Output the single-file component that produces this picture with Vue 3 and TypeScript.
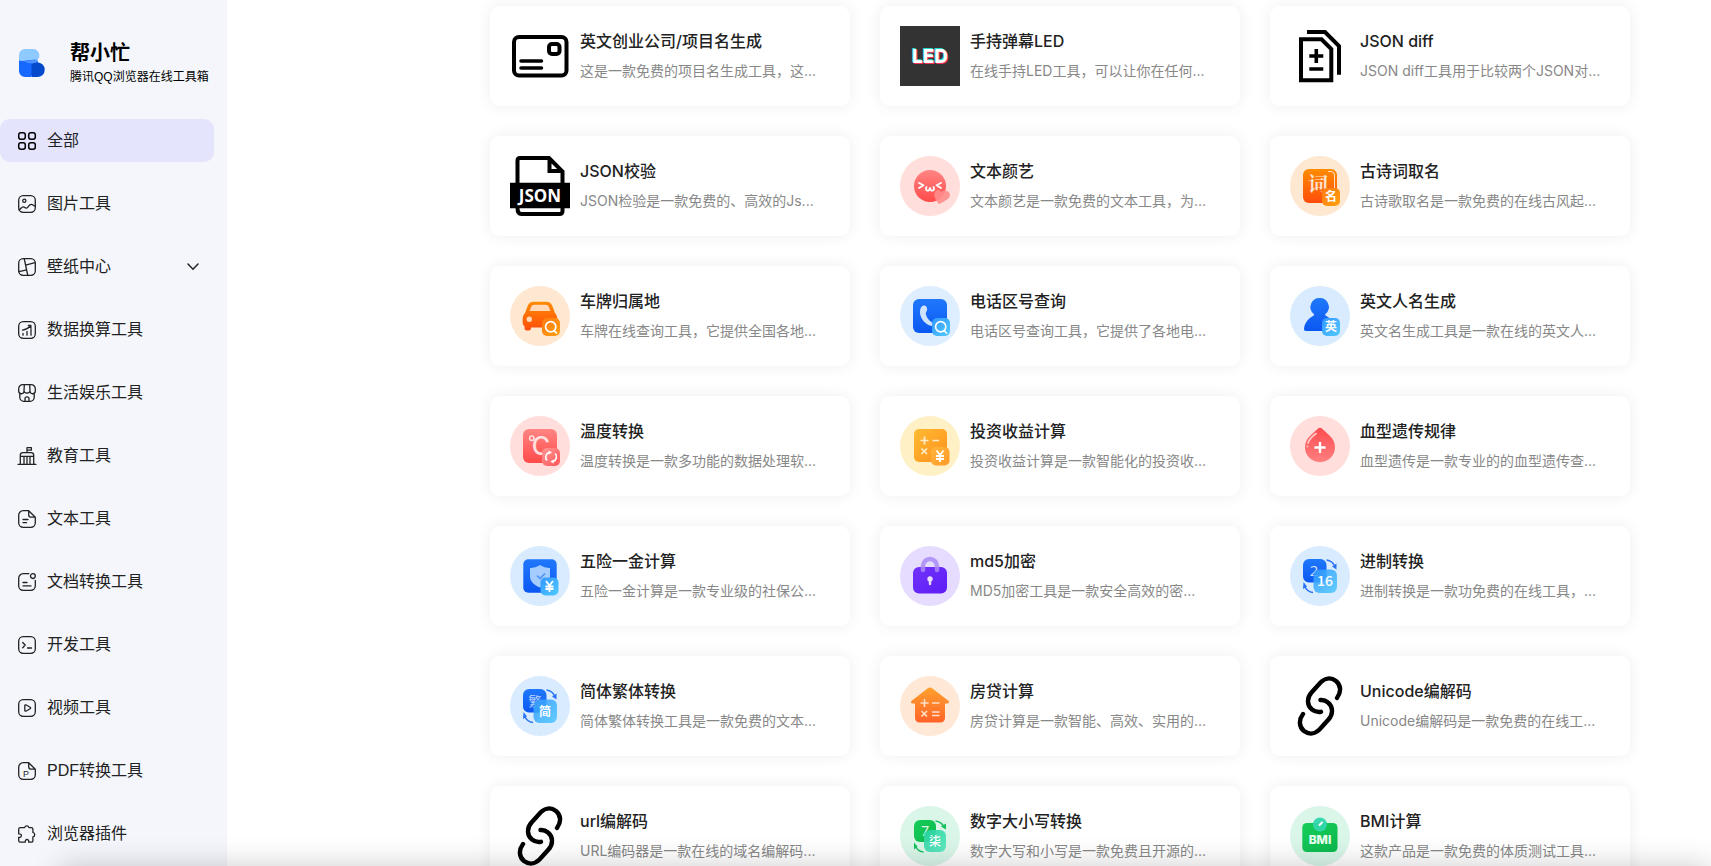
<script setup lang="ts">
interface NavItem {
  icon: string
  label: string
  expandable?: boolean
}

interface Tool {
  icon: string
  tint?: string
  title: string
  desc: string
}

const navItems: NavItem[] = [
  { icon: 'all', label: '全部' },
  { icon: 'image', label: '图片工具' },
  { icon: 'wallpaper', label: '壁纸中心', expandable: true },
  { icon: 'chart', label: '数据换算工具' },
  { icon: 'shop', label: '生活娱乐工具' },
  { icon: 'school', label: '教育工具' },
  { icon: 'text', label: '文本工具' },
  { icon: 'doc', label: '文档转换工具' },
  { icon: 'code', label: '开发工具' },
  { icon: 'video', label: '视频工具' },
  { icon: 'pdf', label: 'PDF转换工具' },
  { icon: 'plugin', label: '浏览器插件' },
]

const tools: Tool[] = [
  { icon: 'namecard', title: '英文创业公司/项目名生成', desc: '这是一款免费的项目名生成工具，这...' },
  { icon: 'led', title: '手持弹幕LED', desc: '在线手持LED工具，可以让你在任何...' },
  { icon: 'diff', title: 'JSON diff', desc: 'JSON diff工具用于比较两个JSON对...' },
  { icon: 'json', title: 'JSON校验', desc: 'JSON检验是一款免费的、高效的Js...' },
  { icon: 'face', tint: '#ffdedb', title: '文本颜艺', desc: '文本颜艺是一款免费的文本工具，为...' },
  { icon: 'poem', tint: '#ffe8d2', title: '古诗词取名', desc: '古诗歌取名是一款免费的在线古风起...' },
  { icon: 'car', tint: '#ffe8d2', title: '车牌归属地', desc: '车牌在线查询工具，它提供全国各地...' },
  { icon: 'phone', tint: '#deeeff', title: '电话区号查询', desc: '电话区号查询工具，它提供了各地电...' },
  { icon: 'person', tint: '#d9ebff', title: '英文人名生成', desc: '英文名生成工具是一款在线的英文人...' },
  { icon: 'celsius', tint: '#ffdedc', title: '温度转换', desc: '温度转换是一款多功能的数据处理软...' },
  { icon: 'invest', tint: '#fff0c6', title: '投资收益计算', desc: '投资收益计算是一款智能化的投资收...' },
  { icon: 'blood', tint: '#ffdedc', title: '血型遗传规律', desc: '血型遗传是一款专业的的血型遗传查...' },
  { icon: 'insurance', tint: '#d9ebff', title: '五险一金计算', desc: '五险一金计算是一款专业级的社保公...' },
  { icon: 'lock', tint: '#e6dcff', title: 'md5加密', desc: 'MD5加密工具是一款安全高效的密...' },
  { icon: 'radix', tint: '#d9ebff', title: '进制转换', desc: '进制转换是一款功免费的在线工具，...' },
  { icon: 'hanzi', tint: '#d9ebff', title: '简体繁体转换', desc: '简体繁体转换工具是一款免费的文本...' },
  { icon: 'house', tint: '#ffe8d6', title: '房贷计算', desc: '房贷计算是一款智能、高效、实用的...' },
  { icon: 'link', title: 'Unicode编解码', desc: 'Unicode编解码是一款免费的在线工...' },
  { icon: 'link', title: 'url编解码', desc: 'URL编码器是一款在线的域名编解码...' },
  { icon: 'digits', tint: '#d9f6e9', title: '数字大小写转换', desc: '数字大写和小写是一款免费且开源的...' },
  { icon: 'bmi', tint: '#d9f6e9', title: 'BMI计算', desc: '这款产品是一款免费的体质测试工具...' },
]
</script>

<template>
  <div class="page">
    <aside class="sidebar">
      <a class="brand" href="#">
        <svg class="logo" viewBox="0 0 28 30" aria-hidden="true">
          <defs>
            <linearGradient id="g-orange" x1="0" y1="0" x2="0" y2="1"><stop offset="0" stop-color="#ff8c00" /><stop offset="1" stop-color="#ff4c0c" /></linearGradient>
            <linearGradient id="g-orange-badge" x1="0" y1="0" x2="1" y2="1"><stop offset="0" stop-color="#ff7a10" /><stop offset="1" stop-color="#ffa010" /></linearGradient>
            <linearGradient id="g-yellow" x1="0" y1="0" x2="1" y2="1"><stop offset="0" stop-color="#ffbb33" /><stop offset="1" stop-color="#ff901c" /></linearGradient>
            <linearGradient id="g-yellow-badge" x1="0" y1="0" x2="1" y2="1"><stop offset="0" stop-color="#ffb53a" /><stop offset="1" stop-color="#ff9a28" /></linearGradient>
            <linearGradient id="g-red" x1="0" y1="0" x2="0" y2="1"><stop offset="0" stop-color="#ff8583" /><stop offset="1" stop-color="#ff4a4a" /></linearGradient>
            <linearGradient id="g-red-badge" x1="0" y1="0" x2="1" y2="1"><stop offset="0" stop-color="#ff9896" /><stop offset="1" stop-color="#ff5558" /></linearGradient>
            <linearGradient id="g-blood" x1="0" y1="0" x2="0" y2="1"><stop offset="0" stop-color="#ff4c4f" /><stop offset="1" stop-color="#ff7f80" /></linearGradient>
            <linearGradient id="g-blue" x1="0" y1="0" x2="0" y2="1"><stop offset="0" stop-color="#2078fb" /><stop offset="1" stop-color="#0b57f2" /></linearGradient>
            <linearGradient id="g-blue-badge" x1="0" y1="0" x2="1" y2="1"><stop offset="0" stop-color="#3296ff" /><stop offset="1" stop-color="#52cbff" /></linearGradient>
            <linearGradient id="g-violet" x1="0" y1="0" x2="1" y2="1"><stop offset="0" stop-color="#7232fa" /><stop offset="1" stop-color="#5d1df6" /></linearGradient>
            <linearGradient id="g-house" x1="0" y1="0" x2="0" y2="1"><stop offset="0" stop-color="#ffa12e" /><stop offset="1" stop-color="#ff6328" /></linearGradient>
            <linearGradient id="g-green" x1="0" y1="0" x2="1" y2="1"><stop offset="0" stop-color="#16cd58" /><stop offset="1" stop-color="#0cb84f" /></linearGradient>
            <linearGradient id="g-green-badge" x1="0" y1="0" x2="1" y2="1"><stop offset="0" stop-color="#27d2a0" /><stop offset="1" stop-color="#58e8bf" /></linearGradient>
          </defs>
          <path d="M1 13V7a6 6 0 0 1 6-6h8a6.500 6.500 0 0 1 4 11.500L1 15Z" fill="#8ec9ff" />
          <path d="M1 12.500c5 1.500 10-1.500 18-.5l1.500 3-7.500 14H7a6 6 0 0 1-6-6Z" fill="#1668ff" />
          <path d="M6 13.200c5-.4 9-2.200 13-1.300 1 .3 1 2-.5 2.800-3 1.400-8 .8-12.500-1.500Z" fill="#4b91ff" />
          <path d="M13.500 16c2-1 4-1.500 6-1.500a7.200 7.200 0 0 1 0 14.500h-6Z" fill="#0549cd" />
        </svg>
        <span class="brand-text">
          <strong class="brand-name">帮小忙</strong>
          <span class="brand-sub">腾讯QQ浏览器在线工具箱</span>
        </span>
      </a>

      <nav class="nav">
        <a v-for="(item, i) in navItems" :key="item.label" href="#" class="nav-item" :class="{ active: i === 0 }">
          <svg class="nav-icon" viewBox="0 0 18 18" aria-hidden="true">
            <template v-if="item.icon === 'all'">
              <rect x="0.700" y="0.700" width="6.600" height="6.600" rx="2.200" />
              <rect x="10.700" y="0.700" width="6.600" height="6.600" rx="2.200" />
              <rect x="0.700" y="10.700" width="6.600" height="6.600" rx="2.200" />
              <rect x="10.700" y="10.700" width="6.600" height="6.600" rx="2.200" />
            </template>
            <template v-else-if="item.icon === 'image'">
              <rect x="0.700" y="0.700" width="16.600" height="16.600" rx="4.500" />
              <circle cx="6.300" cy="5.800" r="1.600" />
              <path d="M1 14.800c1.800-.4 2.400-3 4.200-2.900 1.600.1 1.700 1.600 3.300 1.200 2.200-.6 2.300-3.800 4.600-3.800 1.800 0 2.500 1.600 4 1.900" />
            </template>
            <template v-else-if="item.icon === 'wallpaper'">
              <rect x="0.700" y="0.700" width="16.600" height="16.600" rx="4.500" />
              <path d="M6.300 1l3.400 16M1 13.600l7.700-1.800M7.600 7.200l9.400-2.500" />
            </template>
            <template v-else-if="item.icon === 'chart'">
              <rect x="0.700" y="0.700" width="16.600" height="16.600" rx="4.500" />
              <path d="M5 12.300v1.900M9 10.300v3.900M13 8v6.200M4.500 9.200C8 8.600 10.500 7.200 12.600 4.800M10.300 4.300l2.600.2v2.500" />
            </template>
            <template v-else-if="item.icon === 'shop'">
              <path d="M1.800 9v4.300a4 4 0 0 0 4 4h6.400a4 4 0 0 0 4-4V9M5 .7h8a4 4 0 0 1 4.300 4v2.200a2.600 2.600 0 0 1-5.300.4L11.700.8M5 .7a4 4 0 0 0-4.300 4v2.200a2.600 2.600 0 0 0 5.300.4L6.300.8M6 7.200c.5 2.600 5.500 2.600 6 0M7 17v-2.200a2 2 0 0 1 4 0V17" />
            </template>
            <template v-else-if="item.icon === 'school'">
              <path d="M0 17.300h18M2.300 17V8.300a2.600 2.600 0 0 1 2.600-2.600h8.200a2.600 2.600 0 0 1 2.600 2.600V17M2.500 9.300h13M6 9.500V17M9 9.500V17M12 9.500V17M9 5.500V.7h4.400v2.500H9.200" />
            </template>
            <template v-else-if="item.icon === 'text'">
              <path d="M10.700.7H5.200A4.500 4.500 0 0 0 .7 5.200v7.600a4.500 4.500 0 0 0 4.500 4.500h7.600a4.500 4.500 0 0 0 4.500-4.500V7.300ZM10.700.9v3.800a2.500 2.500 0 0 0 2.500 2.500h4M5 9.500h5M5 12.700h3.500" />
            </template>
            <template v-else-if="item.icon === 'doc'">
              <path d="M10.800.7H5.200A4.500 4.500 0 0 0 .7 5.200v7.600a4.500 4.500 0 0 0 4.500 4.500h7.600a4.500 4.500 0 0 0 4.500-4.500V7.300M5 9.500h4M5 12.900h8" />
              <circle cx="14.900" cy="3.100" r="2.400" />
            </template>
            <template v-else-if="item.icon === 'code'">
              <rect x="0.700" y="0.700" width="16.600" height="16.600" rx="4.500" />
              <path d="M4.700 6.500 7.200 9l-2.500 2.700M9.500 12h4" />
            </template>
            <template v-else-if="item.icon === 'video'">
              <rect x="0.700" y="0.700" width="16.600" height="16.600" rx="4.500" />
              <path d="M6.800 6.800c0-.9.800-1.200 1.500-.8l3.800 2.200c.7.400.7 1.200 0 1.600L8.300 12c-.7.400-1.500.1-1.500-.8Z" />
            </template>
            <template v-else-if="item.icon === 'pdf'">
              <path d="M10.700.7H5.200A4.500 4.500 0 0 0 .7 5.200v7.600a4.500 4.500 0 0 0 4.500 4.500h7.600a4.500 4.500 0 0 0 4.500-4.500V7.300ZM10.700.9v3.800a2.500 2.500 0 0 0 2.500 2.500h4" />
              <text class="nav-icon-letter" x="5" y="14.500">P</text>
            </template>
            <template v-else>
              <path d="M3.400 2.600h3.200a2.300 2.300 0 0 1 4.400 0h2.300a1.600 1.600 0 0 1 1.600 1.600v3.200a2.300 2.300 0 0 1 0 4.500v3.600a1.600 1.600 0 0 1-1.600 1.700h-2.600c.5-3.600-3.900-3.600-3.400 0H2.300a1.600 1.600 0 0 1-1.600-1.600v-3.300c3.600.5 3.600-3.900 0-3.400V4.200a1.600 1.600 0 0 1 1.600-1.600Z" />
            </template>
          </svg>
          <span class="nav-label">{{ item.label }}</span>
          <svg v-if="item.expandable" class="chevron" viewBox="0 0 12 12" aria-hidden="true">
            <path d="M1 3 6 8.200 11 3" />
          </svg>
        </a>
      </nav>
    </aside>

    <main class="content">
      <div class="grid">
        <a v-for="tool in tools" :key="tool.title" href="#" class="card">
          <svg class="tool-icon" viewBox="0 0 60 60" aria-hidden="true">
            <circle v-if="tool.tint" cx="30" cy="30" r="30" :fill="tool.tint" />

            <g v-if="tool.icon === 'namecard'" fill="none" stroke="#000" stroke-width="4" stroke-linecap="round">
              <rect x="4" y="11" width="52.500" height="38.500" rx="5" />
              <rect x="39" y="18" width="10.500" height="10" rx="3" />
              <path d="M11 35h20.500M11 42h20.500" stroke-width="3.500" />
            </g>

            <g v-else-if="tool.icon === 'led'" font-family="Inter, sans-serif" font-weight="800" font-size="19" text-anchor="middle">
              <rect width="60" height="60" fill="#333" />
              <text x="29.300" y="36.400" fill="#25d9cf">LED</text>
              <text x="30.700" y="37.600" fill="#f5325b">LED</text>
              <text x="30" y="37" fill="#fff">LED</text>
            </g>

            <g v-else-if="tool.icon === 'diff'" fill="none" stroke="#000" stroke-width="4">
              <path d="M11 13.300h20.500L41.300 23v31.300H11ZM17 6h18l14 14v28.800" />
              <path d="M26.300 23v14M19.300 30h14M19.300 43h14" stroke-width="3.600" />
            </g>

            <g v-else-if="tool.icon === 'json'">
              <path d="M7.500 28V4.500Q7.500 2 10 2h29l13.500 13.500V55q0 3-3 3h-38q-4 0-4-6M39.500 2v13h13" fill="none" stroke="#000" stroke-width="4" />
              <path d="M0 26.700h60v25.600H0Z" />
              <text x="30" y="46" fill="#fff" font-family="Noto Sans, sans-serif" font-weight="700" font-size="17" text-anchor="middle">JSON</text>
            </g>

            <g v-else-if="tool.icon === 'face'">
              <circle cx="30" cy="30" r="16" fill="url(#g-red)" />
              <path d="m19 27 4.500 2.300L19 32M41 27l-4.500 2.300L41 32M26.500 31c-2.300 4.700 3.500 4.700 3.500.8 0 3.900 5.800 3.900 3.500-.8" fill="none" stroke="#fff" stroke-width="1.800" stroke-linecap="round" stroke-linejoin="round" />
              <path d="M39 48c-3.500-4-5.500-8-4.300-11.300 1-3 5-3.700 6.500-.5 2.300-2.800 7-1.900 8.300 1 1.200 2.800-.5 5-2.700 6.500-2.300 1.700-5 3-7.800 4.300Z" fill="#ff8d8b" opacity=".9" />
            </g>

            <g v-else-if="tool.icon === 'poem'" text-anchor="middle" fill="#fff">
              <rect x="13" y="13" width="34" height="34" rx="6" fill="url(#g-orange)" />
              <path d="M38 15.500h3a3.500 3.500 0 0 1 3.500 3.500v13" fill="none" stroke="#ffe0c0" />
              <text x="28" y="36" font-family="Noto Serif CJK SC, Noto Sans CJK SC, serif" font-weight="700" font-size="20" opacity=".8">词</text>
              <rect x="32" y="32" width="18" height="18" rx="5" fill="url(#g-orange-badge)" />
              <text x="41" y="45" font-family="Noto Sans CJK SC, sans-serif" font-weight="700" font-size="12">名</text>
            </g>

            <g v-else-if="tool.icon === 'car'">
              <path d="m15 27 2.500-6.500c1.300-3.400 3-4.800 6.500-4.800h12c3.500 0 5.200 1.400 6.500 4.800L45 27c1.500 1.500 2.300 4 2.300 6v8.500H21V42a2.500 2.500 0 0 1-2.500 2.500h-1.500a2.500 2.500 0 0 1-2.500-2.500v-2c-1.300-.6-1.800-1.500-1.800-3.200V33c0-2 .8-4.500 2.300-6Z" fill="url(#g-orange)" />
              <path d="m19.500 25 1.600-4c.6-1.600 1.600-2.300 3.400-2.300h11c1.800 0 2.800.7 3.400 2.300l1.600 4Z" fill="#ffd9b8" />
              <circle cx="19.300" cy="33.300" r="2.700" fill="#ffd9b8" />
              <rect x="32" y="32" width="18" height="18" rx="5" fill="url(#g-orange-badge)" />
              <path d="M46.500 47 44 44.500M35.600 40.800a5.100 5.100 0 1 0 10.200 0 5.100 5.100 0 1 0-10.200 0Z" fill="none" stroke="#fff" stroke-width="1.700" stroke-linecap="round" />
            </g>

            <g v-else-if="tool.icon === 'phone'">
              <rect x="13" y="13" width="34" height="34" rx="6" fill="url(#g-blue)" />
              <path d="M22.500 20c2.500-1.500 4.500.5 4.700 3.300.1 2-1.700 2.700-1.400 4.500.6 4 4.200 8.300 8.200 9.500V40c-8 .5-14.500-8-14-14.500.1-2.500 1-4.700 2.500-5.500Z" fill="#cfe3ff" />
              <rect x="32" y="32" width="18" height="18" rx="5" fill="url(#g-blue-badge)" />
              <path d="M46.500 47 44 44.500M35.600 40.800a5.100 5.100 0 1 0 10.200 0 5.100 5.100 0 1 0-10.200 0Z" fill="none" stroke="#fff" stroke-width="1.700" stroke-linecap="round" />
            </g>

            <g v-else-if="tool.icon === 'person'">
              <path d="M29.700 12a9 9 0 0 1 6 15.800c-.8.700-.7 1.500.3 2 5.500 2.700 9 8 9.300 13.200 0 1.300-.6 2-2 2H16c-1.400 0-2-.7-2-2 .3-5.200 3.800-10.500 9.300-13.200 1-.5 1.100-1.300.3-2A9 9 0 0 1 29.700 12Z" fill="url(#g-blue)" />
              <rect x="32" y="32" width="18" height="18" rx="5" fill="url(#g-blue-badge)" />
              <text x="41" y="45" fill="#fff" font-family="Noto Sans CJK SC, sans-serif" font-weight="700" font-size="12" text-anchor="middle">英</text>
            </g>

            <g v-else-if="tool.icon === 'celsius'">
              <rect x="13" y="13" width="34" height="34" rx="6" fill="url(#g-red)" />
              <circle cx="21.800" cy="22.300" r="2.200" fill="none" stroke="#ffe1e0" stroke-width="1.500" />
              <text x="31" y="39" fill="#ffe1e0" font-family="Inter, sans-serif" font-weight="500" font-size="25" text-anchor="middle">C</text>
              <rect x="32" y="32" width="18" height="18" rx="5" fill="url(#g-red-badge)" />
              <path d="M39 36.500a5 5 0 0 0-2 8M43.200 45.500a5 5 0 0 0 2-8" fill="none" stroke="#fff" stroke-width="1.600" />
              <path d="m38.500 34.500 3.500 2-3.500 2ZM43.700 47.500l-3.500-2 3.500-2Z" fill="#fff" />
            </g>

            <g v-else-if="tool.icon === 'invest'">
              <rect x="14" y="13" width="33" height="33" rx="5" fill="url(#g-yellow)" />
              <path d="M20.500 24.500h8M24.500 20.500v8M32.500 24.500H39M21.500 32.500l5.500 5.500M27 32.500 21.500 38" stroke="#ffeccb" stroke-width="1.700" />
              <rect x="31" y="31" width="18.500" height="18.500" rx="5" fill="url(#g-yellow-badge)" />
              <path d="m36.500 34.500 3.500 4.500 3.500-4.500M40 39v7M36 40h8M36 43h8" fill="none" stroke="#fff" stroke-width="1.800" />
            </g>

            <g v-else-if="tool.icon === 'blood'">
              <path d="M27.500 13c1.600-1.600 3.400-1.600 5 0L40 20c3.300 3.200 5 7 5 11.200a15 15 0 0 1-30 0C15 27 16.700 23.200 20 20Z" fill="url(#g-blood)" />
              <path d="M30 26v11M24.500 31.500h11" stroke="#fff" stroke-width="2.300" />
              <path d="M18 27c1-3.500 4-6.500 8-9.500" fill="none" stroke="#ffc7c6" stroke-width="1.800" stroke-linecap="round" />
              <circle cx="17.500" cy="30.500" r="1" fill="#ffc7c6" />
            </g>

            <g v-else-if="tool.icon === 'insurance'">
              <rect x="13.300" y="13.300" width="33.400" height="33.400" rx="5" fill="url(#g-blue)" />
              <path d="M30 19c3 2 6.500 3 10 3v8c0 6-5 9.500-10 11.500C25 39.500 20 36 20 30v-8c3.500 0 7-1 10-3Z" fill="#a5ccff" />
              <path d="m27 29.500 3 3 5-5" fill="none" stroke="#4f93f8" stroke-width="1.700" />
              <rect x="30.500" y="31.500" width="18" height="18" rx="5" fill="url(#g-blue-badge)" />
              <path d="m36 35 3.500 4.500L43 35M39.500 39v7M35.500 40.500h8M35.500 43h8" fill="none" stroke="#fff" stroke-width="1.800" />
            </g>

            <g v-else-if="tool.icon === 'lock'">
              <rect x="13" y="21" width="34" height="26.500" rx="6" fill="url(#g-violet)" />
              <path d="M23 24v-4a7 7 0 0 1 14 0v4" fill="none" stroke="#a98af9" stroke-width="4.500" stroke-linecap="round" opacity=".85" />
              <circle cx="30" cy="33" r="2.700" fill="#e8dcff" />
              <path d="M30 34v4" stroke="#e8dcff" stroke-width="2.400" stroke-linecap="round" />
            </g>

            <g v-else-if="tool.icon === 'radix' || tool.icon === 'hanzi'" fill="#fff" text-anchor="middle">
              <rect x="13" y="13" width="23.500" height="23.500" rx="6" fill="url(#g-blue)" />
              <path d="M36.500 14c4 .5 7 3 8.500 6.500M14.500 40c1.500 3.500 4.500 6 8.500 6.500" fill="none" stroke="#2a72f8" stroke-width="1.500" />
              <path d="m42 20.500 4.500-3v6ZM17 40.500 13.500 36l-.5 7Z" fill="#2a72f8" />
              <text v-if="tool.icon === 'radix'" x="24" y="30" font-family="Open Sans, sans-serif" font-size="15" opacity=".8">2</text>
              <text v-else x="25" y="30" font-family="Noto Sans CJK SC, sans-serif" font-size="13" opacity=".7">繁</text>
              <rect x="23.500" y="23.500" width="23.500" height="23.500" rx="6" fill="url(#g-blue-badge)" opacity=".88" />
              <text v-if="tool.icon === 'radix'" x="35" y="40" font-family="Noto Sans CJK SC, sans-serif" font-weight="500" font-size="14">16</text>
              <text v-else x="35" y="40" font-family="Noto Sans CJK SC, sans-serif" font-weight="700" font-size="12">简</text>
            </g>

            <g v-else-if="tool.icon === 'house'">
              <path d="M27.500 12.500c1.600-1.200 3.400-1.200 5 0l15.500 12c1.700 1.500 1 3-.8 3H45V42a4.500 4.500 0 0 1-4.500 4.500h-21A4.500 4.500 0 0 1 15 42V27.500h-2.200c-1.800 0-2.500-1.500-.8-3Z" fill="url(#g-house)" />
              <path d="M20.500 27h8M24.500 23v8M32 27h7.500M21.500 35l5.500 5.500M27 35l-5.500 5.500M32 36h7.500M32 39.500h7.500" stroke="#ffe0c8" stroke-width="1.600" />
            </g>

            <g v-else-if="tool.icon === 'link'" fill="none" stroke="#000" stroke-width="4.400" stroke-linecap="round">
              <path d="M47 22c4.500-6 4-13-1-17-5-3.800-11-3-15.500 1.500l-9 10C16.500 22 17 29.500 22 33.500c2.800 2.200 6 2.800 9 2.300" />
              <path d="M13 38c-4.500 6-4 13 1 17 5 3.800 11 3 15.500-1.500l9-10C43.500 38 43 30.500 38 26.500c-2.300-2-5-2.700-7.500-2.500" />
            </g>

            <g v-else-if="tool.icon === 'digits'" fill="#fff" text-anchor="middle">
              <rect x="14" y="14" width="22" height="22" rx="6" fill="url(#g-green)" />
              <path d="M35.500 15c4 .5 6.500 2.500 8.500 5.500M15 39.500c1.500 3.500 4.500 6 8.500 6.500" fill="none" stroke="#14bf5d" stroke-width="1.500" />
              <path d="m41 20.500 5-3v6ZM17.500 40.500 14 36.500v7Z" fill="#14bf5d" />
              <text x="25" y="30" font-family="Lato, sans-serif" font-size="14" opacity=".85">7</text>
              <rect x="24" y="24" width="22" height="22" rx="6" fill="url(#g-green-badge)" opacity=".93" />
              <text x="35" y="40" font-family="Noto Sans CJK SC, sans-serif" font-weight="500" font-size="12">柒</text>
            </g>

            <g v-else>
              <rect x="12.300" y="17" width="35.200" height="29" rx="4.500" fill="url(#g-green)" />
              <circle cx="30" cy="18.500" r="7" fill="#32d6ab" opacity=".95" />
              <path d="m29.500 19 2.500-2.500" stroke="#fff" stroke-width="2" stroke-linecap="round" />
              <text x="30" y="38" fill="#e8fff1" font-family="Inter, sans-serif" font-weight="800" font-size="12" text-anchor="middle">BMI</text>
            </g>
          </svg>
          <div class="card-text">
            <h3 class="card-title">{{ tool.title }}</h3>
            <p class="card-desc">{{ tool.desc }}</p>
          </div>
        </a>
      </div>
    </main>

    <div class="bottom-bar"></div>
  </div>
</template>

<style>
body {
  margin: 0;
  background: #fff;
}
</style>

<style scoped>
.page {
  display: flex;
  height: 100vh;
  overflow: hidden;
  font-family: "Liberation Sans", "Noto Sans CJK SC", sans-serif;
  color: #222;
}

a {
  color: inherit;
  text-decoration: none;
}

.sidebar {
  flex: none;
  box-sizing: border-box;
  width: 227px;
  padding: 40px 13px 0 0;
  background: #f4f6fb;
}

.brand {
  display: flex;
  align-items: center;
  gap: 24px;
  height: 46px;
  padding-left: 18px;
  color: #000;
}

.logo {
  flex: none;
  width: 28px;
  height: 30px;
}

.brand-text {
  display: flex;
  flex-direction: column;
  white-space: nowrap;
}

.brand-name {
  font-size: 20px;
  line-height: 28px;
}

.brand-sub {
  font-size: 12px;
  line-height: 20px;
}

.nav {
  display: flex;
  flex-direction: column;
  gap: 20px;
  margin-top: 33px;
}

.nav-item {
  display: flex;
  align-items: center;
  height: 43px;
  padding: 0 15px 0 18px;
  border-radius: 10px;
  font-size: 16px;
}

.nav-item.active {
  background: #e4e4fc;
}

.nav-icon {
  flex: none;
  width: 18px;
  height: 18px;
  margin-top: 1px;
  margin-right: 11px;
  overflow: visible;
  fill: none;
  stroke: #222;
  stroke-width: 1.3;
  stroke-linecap: round;
  stroke-linejoin: round;
}

.nav-icon-letter {
  fill: #222;
  stroke: none;
  font-size: 9px;
}

.active .nav-icon {
  stroke: #000;
  stroke-width: 1.5;
}

.nav-label {
  flex: 1;
  line-height: 24px;
}

.chevron {
  width: 12px;
  height: 12px;
  fill: none;
  stroke: #222;
  stroke-width: 1.5;
  stroke-linecap: round;
}

.content {
  flex: 1;
  min-width: 0;
  padding: 6px 81px 0 263px;
}

.grid {
  display: grid;
  grid-template-columns: repeat(3, minmax(0, 1fr));
  gap: 30px;
}

.card {
  display: flex;
  box-sizing: border-box;
  gap: 10px;
  height: 100px;
  padding: 20px;
  border-radius: 10px;
  background: #fff;
  box-shadow: 0 0 16px rgba(0, 0, 0, 0.07);
}

.tool-icon {
  flex: none;
  width: 60px;
  height: 60px;
}

.card-text {
  min-width: 0;
  font-family: Inter, "Noto Sans CJK SC", sans-serif;
}

.card-title,
.card-desc {
  margin: 0;
  overflow: hidden;
  white-space: nowrap;
  text-overflow: ellipsis;
}

.card-title {
  margin-top: 3px;
  font-size: 16px;
  font-weight: 500;
  line-height: 24px;
  color: #222;
}

.card-desc {
  margin-top: 8px;
  font-size: 14px;
  line-height: 20px;
  color: #888;
}

.bottom-bar {
  position: fixed;
  right: 0;
  bottom: -60px;
  left: 60px;
  height: 60px;
  box-shadow: 0 0 30px rgba(0, 0, 0, 0.2);
}
</style>
